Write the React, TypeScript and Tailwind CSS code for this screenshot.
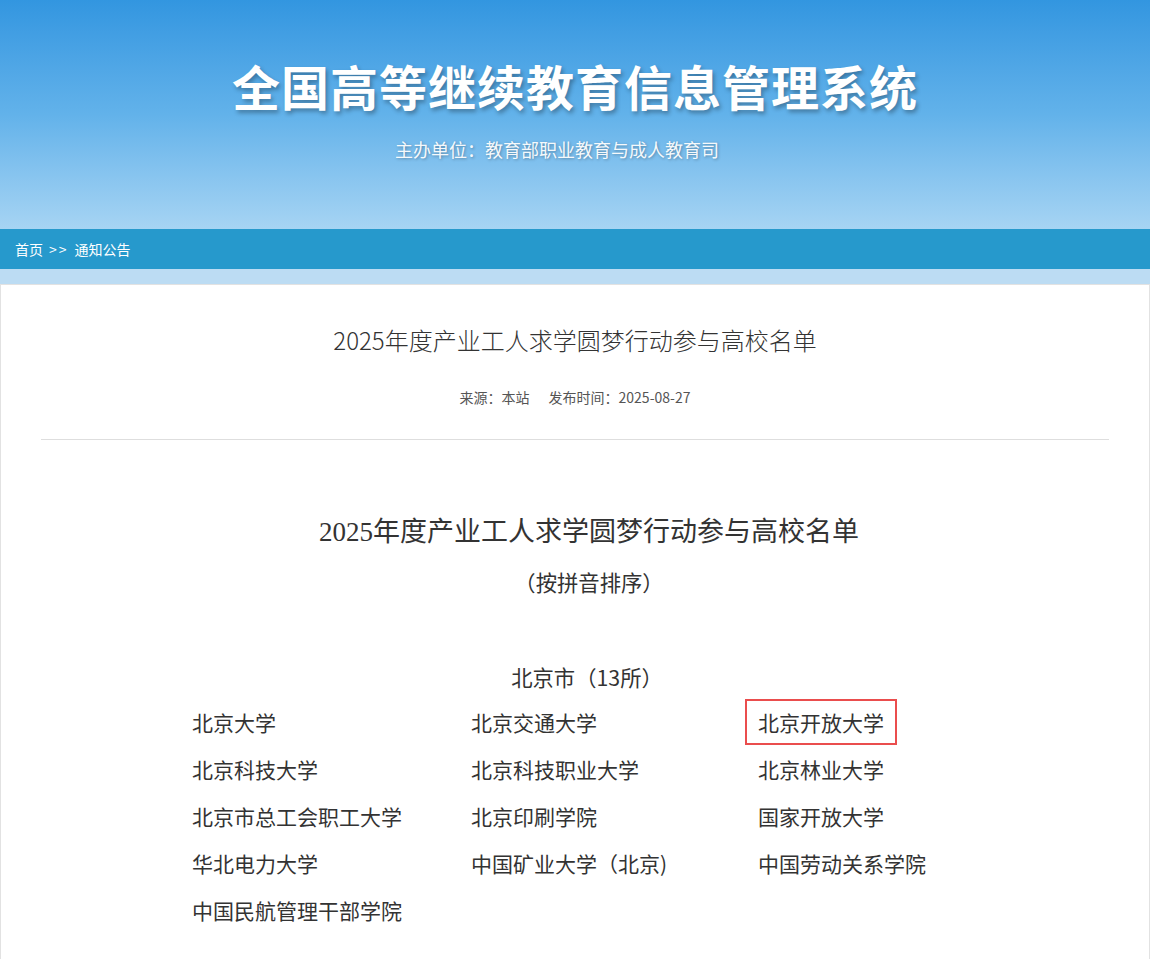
import React from 'react';

const schools: string[] = [
  '北京大学',
  '北京交通大学',
  '北京开放大学',
  '北京科技大学',
  '北京科技职业大学',
  '北京林业大学',
  '北京市总工会职工大学',
  '北京印刷学院',
  '国家开放大学',
  '华北电力大学',
  '中国矿业大学（北京)',
  '中国劳动关系学院',
  '中国民航管理干部学院',
];

const highlighted = '北京开放大学';

const Header: React.FC = () => (
  <div className="h-[229px] bg-gradient-to-b from-[#3296e0] via-[#62b2ea] to-[#a6d4f3] flex flex-col items-center">
    <h1 className="pt-[61px] text-[48px] leading-[48px] font-bold text-white tracking-[1px] [text-shadow:2px_3px_4px_rgba(0,0,0,0.3)]">
      全国高等继续教育信息管理系统
    </h1>
    <p className="mt-[28px] mr-[36px] text-[18px] leading-6 text-white/95 [text-shadow:1px_1px_3px_rgba(0,0,0,0.3)]">
      主办单位：教育部职业教育与成人教育司
    </p>
  </div>
);

export default function App() {
  return (
    <div className="min-h-screen bg-white text-[#333] font-['Noto_Sans_CJK_SC','Noto_Sans',sans-serif]">
      <Header />

      <div className="h-10 bg-[#2699cc] px-[15px] flex items-center text-white text-sm">
        <span>首页</span>
        <span className="mx-[6px] tracking-[2px]">&gt;&gt;</span>
        <span>通知公告</span>
      </div>
      <div className="h-[15px] bg-[#bcdcf3]" />

      <div className="border border-[#e2e2e2] bg-white pb-10">
        <h2 className="pt-[39px] text-center text-[24px] leading-8 font-light text-[#333]">
          2025年度产业工人求学圆梦行动参与高校名单
        </h2>
        <div className="mt-[31px] text-center text-[14px] leading-5 text-[#555]">
          来源：本站<span className="inline-block w-[19px]" />发布时间：2025-08-27
        </div>
        <div className="mt-[32px] mx-10 h-px bg-[#dedede]" />

        <div className="pl-[28px]">
          <div className="mt-[74px] text-center text-[27px] leading-9 text-[#333] font-['Liberation_Serif','Noto_Sans_CJK_SC',serif]">
            2025年度产业工人求学圆梦行动参与高校名单
          </div>
          <div className="mt-[18px] text-center text-[21.33px] leading-7 text-[#333]">（按拼音排序）</div>

          <div className="mt-[67px] pr-[4px] text-center text-[21.33px] leading-7 text-[#333]">北京市（13所）</div>
        </div>

        <div className="mt-[8px] pl-[191px] grid grid-cols-[279px_287px_1fr] gap-y-px">
          {schools.map((name) => (
            <div key={name} className="h-[46px] flex items-center">
              <span
                className={`inline-block -ml-[13px] px-[11px] py-[7px] text-[21px] leading-7 text-[#333] border-2 ${
                  name === highlighted ? 'border-[#ea4d4d]' : 'border-transparent'
                }`}
              >
                {name}
              </span>
            </div>
          ))}
        </div>
      </div>
    </div>
  );
}
